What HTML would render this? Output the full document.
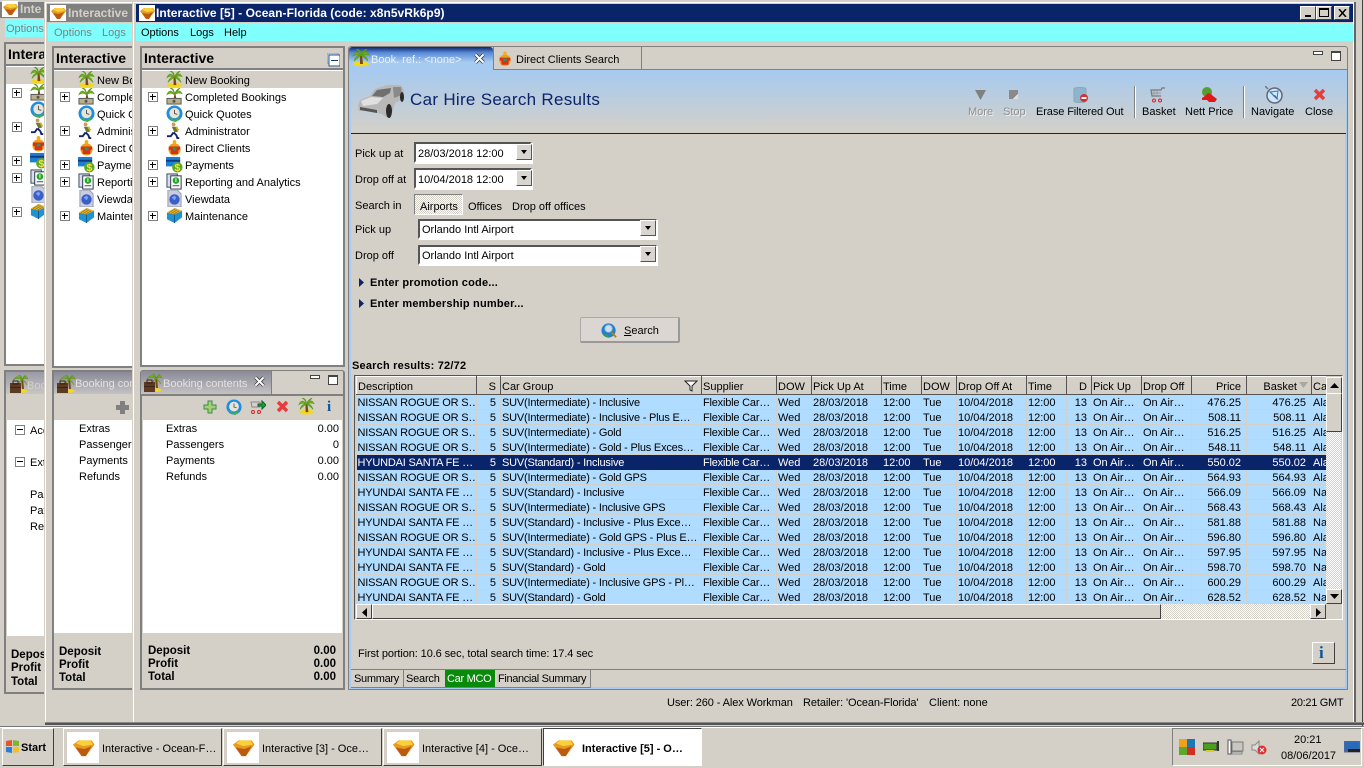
<!DOCTYPE html>
<html><head><meta charset="utf-8"><title>Interactive</title>
<style>
html,body{margin:0;padding:0;width:1364px;height:768px;overflow:hidden;background:#d4d0c8}
body{position:relative;font:11px/18px "Liberation Sans",sans-serif;color:#000}
div,span,svg{position:absolute;box-sizing:border-box}
.t{white-space:nowrap}
.pn{overflow:hidden;border:2px solid #808080;background:#fff}
.ph{left:0;top:0;right:0;height:22px;background:#d4d0c8;border-bottom:2px solid #808080;font:bold 14px/20px "Liberation Sans",sans-serif;padding-left:2px}
.sel{left:0;right:0;height:17px;background:#d4d0c8}
.pl{width:10px;height:10px;border:1px solid #808080;background:#fff}
.pl:before{content:"";position:absolute;left:1px;top:3px;width:6px;height:2px;background:linear-gradient(#000 1px,transparent 1px)}
.pl:after{content:"";position:absolute;left:3px;top:1px;width:1px;height:6px;background:#000}
.mi{width:10px;height:10px;border:1px solid #808080;background:#fff}
.mi:before{content:"";position:absolute;left:1px;top:3px;width:6px;height:1px;background:#000}
.btn{background:#d4d0c8;border:1px solid;border-color:#fff #404040 #404040 #fff}
.inp{background:#fff;border:2px solid;border-color:#555 #fff #fff #555;box-shadow:1px 1px 0 #fff}
.dd{width:16px;height:16px;background:#d9d5d0;border:1px solid;border-color:#fff #555 #555 #fff}
.dd:after{content:"";position:absolute;left:4px;top:5px;border:3px solid transparent;border-top:4px solid #000;border-bottom:0}
table{border-collapse:collapse;table-layout:fixed;position:absolute;left:0;top:0;font:11px/12px "Liberation Sans",sans-serif}
td{padding:2px 1px 0 1px;height:12px;white-space:nowrap;overflow:hidden;background:#b0dcff;border-right:1px solid #d4d0c8;border-bottom:1px solid #d4d0c8}
td:nth-child(1),td:nth-child(3),td:nth-child(4){letter-spacing:-.2px}
tr.h td{height:15px;background:#d4d0c8;border:1px solid;border-color:#fff #555 #555 #fff;letter-spacing:0}
tr.s td{background:#0a246a;color:#fff;border-color:#0a246a}
td.r{text-align:right;padding-right:4px}
td.r:nth-child(14),td.r:nth-child(15){padding-right:5px}
.dith{background:repeating-conic-gradient(#fff 0 25%,#d4d0c8 0 50%) 0 0/2px 2px}
.tk{top:728px;height:38px;width:159px;border:1px solid;border-color:#fff #404040 #404040 #fff;background:#d4d0c8}
.tk span.t{left:38px;top:11px}
.bold{font-weight:bold}
</style></head>
<body>
<svg width="0" height="0" style="left:0;top:0">
<defs>
<symbol id="logo" viewBox="0 0 16 16"><rect width="16" height="16" fill="#fff"/><path d="M1 6 5 3h9l2 3-6 8H7z" fill="#e69a20"/><path d="M3 5 6 3h7l2 3-7 1z" fill="#f9cf3c"/><path d="M7 14 3 8l6 1 5-2-4 7z" fill="#bd5a12"/></symbol>
<symbol id="palm" viewBox="0 0 18 18"><ellipse cx="9" cy="15" rx="8" ry="2.500" fill="#f4d820"/><path d="M8 6h2l1 9H8z" fill="#7a4a10"/><path d="M9 7C6 2 3 2 1 7c3-2 5-2 8 0zm0 0c3-5 6-5 8-1-3-1-5-1-8 1zM9 7C8 2 6 1 4 0c2 0 5 1 5 7zm0 0c1-4 3-6 6-7-2 2-4 4-6 7zM9 6C5 6 3 9 2 12c3-3 5-4 7-6zm0 0c4 0 6 3 7 6-3-3-5-4-7-6z" fill="#70ad1e" stroke="#5f9a18" stroke-width=".7"/></symbol>
<symbol id="palmm" viewBox="0 0 18 18"><path d="M9 6h1l1 6H8z" fill="#7a4a10"/><path d="M9 7C6 2 3 2 1 7c3-2 5-2 8 0zm0 0c3-5 6-5 8-1-3-1-5-1-8 1zM9 7C8 2 6 1 4 0c2 0 5 1 5 7zm0 0c1-4 3-6 6-7-2 2-4 4-6 7z" fill="#70ad1e" stroke="#5f9a18" stroke-width=".7"/><rect x="1" y="11" width="15" height="6" fill="#b8b08a" stroke="#555"/><circle cx="8.500" cy="14" r="1.600" fill="#555"/></symbol>
<symbol id="clock" viewBox="0 0 18 18"><circle cx="9" cy="9" r="8.500" fill="#1e8fe0"/><circle cx="9" cy="8.500" r="5.500" fill="#e8e4d8"/><path d="M9 5v4l3 1" fill="none" stroke="#555"/><path d="M4 13c3 5 7 4 10 0l-4 5z" fill="#52b030" stroke="#52b030"/></symbol>
<symbol id="run" viewBox="0 0 18 18"><circle cx="8" cy="2.500" r="2" fill="#c99b5b"/><path d="M6 5h5l2 5-4 1z" fill="#6d7a30"/><path d="M8 11l3 3 1 3h2M8 11l-3 4H1" fill="none" stroke="#14246a" stroke-width="2"/><path d="M11 5l2 4" stroke="#ddb020" stroke-width="2"/></symbol>
<symbol id="cli" viewBox="0 0 18 18"><circle cx="9" cy="3" r="2" fill="#f0b020"/><circle cx="9" cy="11" r="6.500" fill="#f0a018"/><path d="M3 8h12v3l-2 1v4H5v-4l-2-1z" fill="#d8301c"/><rect x="7" y="9" width="4" height="3" fill="#2a9a50"/></symbol>
<symbol id="pay" viewBox="0 0 18 18"><rect y="1" width="15" height="10" fill="#1b7fd0"/><rect y="4" width="15" height="2" fill="#123a80"/><circle cx="12" cy="12" r="5.500" fill="#5fa81e"/><text x="12" y="16" font-size="11" font-weight="bold" text-anchor="middle" fill="#f6e04a" font-family="Liberation Sans">$</text></symbol>
<symbol id="rep" viewBox="0 0 18 18"><rect x="1" y="1" width="11" height="14" fill="#dde" stroke="#345"/><rect x="5" y="3" width="11" height="14" fill="#fff" stroke="#234"/><circle cx="10.500" cy="8" r="3.500" fill="#22a822"/><rect x="10" y="5.500" width="1" height="4" fill="#fff"/><rect x="7" y="13" width="7" height="1" fill="#345"/></symbol>
<symbol id="view" viewBox="0 0 18 18"><path d="M2 0h10l4 4v14H2z" fill="#c8cede" stroke="#99a"/><circle cx="9" cy="10" r="5.500" fill="#3a60c8"/><path d="M6 8l3-2 2 2-2 3z" fill="#7fa0f0"/></symbol>
<symbol id="mnt" viewBox="0 0 18 18"><path d="M1 6l8-5 8 3v7l-8 6-8-4z" fill="#1f94d0"/><path d="M1 6l8-5 8 3-8 4z" fill="#f0c030"/><path d="M3 6l7-4M5 7l7-4M7 8l7-4" stroke="#a87a10"/><path d="M9 8v9" stroke="#0f5a90"/></symbol>
<symbol id="case" viewBox="0 0 18 18"><ellipse cx="13" cy="16" rx="4.500" ry="1.800" fill="#f4d820"/><path d="M11 3l1 11h2l-1-11z" fill="#7a4a10"/><path d="M12 5C9 0 6 1 3 5c3-2 6-2 9 0zm0 0c3-5 5-4 6-1-2-1-4-1-6 1zm0 0c-3 1-4 3-4 5 1-2 2-4 4-5zm0 0c3 1 4 3 5 5-1-2-3-4-5-5zM12 5c-1-3-2-4-4-5 2 0 4 1 4 5zm0 0c1-3 2-4 4-5-1 1-3 3-4 5z" fill="#70ad1e" stroke="#5f9a18" stroke-width=".6"/><rect x="0" y="8" width="11" height="10" fill="#5c3a24"/><rect x="3" y="6" width="5" height="3" fill="none" stroke="#3a2414"/><rect y="12" width="11" height="1" fill="#3a2414"/></symbol>
<symbol id="srch" viewBox="0 0 18 18"><circle cx="8" cy="9" r="7.500" fill="#1a80d8"/><circle cx="8" cy="7" r="4" fill="#cde" stroke="#8ab"/><path d="M11 11l5 5" stroke="#b08020" stroke-width="2"/><path d="M2 12l4 4 4-1z" fill="#3aa030"/></symbol>
</defs></svg>

<!-- Window 1 -->
<div style="left:0;top:2px;width:45px;height:16px;background:#808080"></div>
<svg style="left:2px;top:1px" width="16" height="16"><use href="#logo"/></svg>
<span class="t bold" style="left:20px;top:0;color:#d4d0c8;font-size:12px">Inte</span>
<div style="left:5px;top:19px;width:40px;height:18px;background:#80ffff"></div>
<span class="t" style="left:6px;top:20px;color:#808080">Options</span>
<div class="pn" style="left:4px;top:42px;width:60px;height:324px">
<div class="ph">Interactive</div>
<div class="sel" style="top:23px"></div>
<div class="pl" style="left:6px;top:44px"></div><div class="pl" style="left:6px;top:78px"></div><div class="pl" style="left:6px;top:112px"></div><div class="pl" style="left:6px;top:129px"></div><div class="pl" style="left:6px;top:163px"></div>
<svg style="left:24px;top:23px" width="17" height="17"><use href="#palm"/></svg>
<svg style="left:24px;top:40px" width="17" height="17"><use href="#palmm"/></svg>
<svg style="left:24px;top:57px" width="17" height="17"><use href="#clock"/></svg>
<svg style="left:24px;top:74px" width="17" height="17"><use href="#run"/></svg>
<svg style="left:24px;top:91px" width="17" height="17"><use href="#cli"/></svg>
<svg style="left:24px;top:108px" width="17" height="17"><use href="#pay"/></svg>
<svg style="left:24px;top:125px" width="17" height="17"><use href="#rep"/></svg>
<svg style="left:24px;top:142px" width="17" height="17"><use href="#view"/></svg>
<svg style="left:24px;top:159px" width="17" height="17"><use href="#mnt"/></svg>
</div>
<div class="pn" style="left:4px;top:370px;width:60px;height:324px;background:#d4d0c8">
<div style="left:0;top:0;width:60px;height:22px;background:linear-gradient(#9a9aa6,#c8c6c4)"></div>
<div style="left:1px;top:48px;width:60px;height:216px;background:#fff"></div>
<svg style="left:4px;top:3px" width="18" height="18"><use href="#case"/></svg>
<span class="t" style="left:21px;top:5px;color:#d4d0c8">Booking</span>
<div class="mi" style="left:9px;top:53px"></div><div class="mi" style="left:9px;top:85px"></div>
<span class="t" style="left:24px;top:50px">Accommodation</span><span class="t" style="left:24px;top:82px">Extras</span>
<span class="t" style="left:24px;top:114px">Passengers</span><span class="t" style="left:24px;top:130px">Payments</span><span class="t" style="left:24px;top:146px">Refunds</span>
<span class="t bold" style="left:5px;top:274px;font-size:11.500px">Deposit</span><span class="t bold" style="left:5px;top:287px;font-size:11.500px">Profit</span><span class="t bold" style="left:5px;top:301px;font-size:11.500px">Total</span>
</div>
<div style="left:44px;top:0;width:2px;height:723px;background:#d4d0c8"></div>

<!-- Window 2 -->
<div style="left:45px;top:2px;width:90px;height:722px;background:#d4d0c8;border-left:1px solid #fff;border-top:1px solid #fff"></div>
<div style="left:47px;top:4px;width:86px;height:18px;background:#808080"></div>
<svg style="left:50px;top:5px" width="16" height="16"><use href="#logo"/></svg>
<span class="t bold" style="left:68px;top:4px;color:#d4d0c8;font-size:12px">Interactive</span>
<div style="left:48px;top:23px;width:85px;height:18px;background:#80ffff"></div>
<span class="t" style="left:54px;top:24px;color:#808080">Options</span><span class="t" style="left:102px;top:24px;color:#808080">Logs</span>
<div class="pn" style="left:52px;top:46px;width:90px;height:322px">
<div class="ph">Interactive</div>
<div class="sel" style="top:23px"></div>
<div class="pl" style="left:6px;top:44px"></div><div class="pl" style="left:6px;top:78px"></div><div class="pl" style="left:6px;top:112px"></div><div class="pl" style="left:6px;top:129px"></div><div class="pl" style="left:6px;top:163px"></div>
<svg style="left:24px;top:23px" width="17" height="17"><use href="#palm"/></svg>
<svg style="left:24px;top:40px" width="17" height="17"><use href="#palmm"/></svg>
<svg style="left:24px;top:57px" width="17" height="17"><use href="#clock"/></svg>
<svg style="left:24px;top:74px" width="17" height="17"><use href="#run"/></svg>
<svg style="left:24px;top:91px" width="17" height="17"><use href="#cli"/></svg>
<svg style="left:24px;top:108px" width="17" height="17"><use href="#pay"/></svg>
<svg style="left:24px;top:125px" width="17" height="17"><use href="#rep"/></svg>
<svg style="left:24px;top:142px" width="17" height="17"><use href="#view"/></svg>
<svg style="left:24px;top:159px" width="17" height="17"><use href="#mnt"/></svg>
<span class="t" style="left:43px;top:24px">New Booking</span><span class="t" style="left:43px;top:41px">Completed</span><span class="t" style="left:43px;top:58px">Quick Quotes</span><span class="t" style="left:43px;top:75px">Administrator</span><span class="t" style="left:43px;top:92px">Direct Clients</span><span class="t" style="left:43px;top:109px">Payments</span><span class="t" style="left:43px;top:126px">Reporting</span><span class="t" style="left:43px;top:143px">Viewdata</span><span class="t" style="left:43px;top:160px">Maintenance</span>
</div>
<div class="pn" style="left:52px;top:370px;width:90px;height:320px;background:#d4d0c8">
<div style="left:0;top:0;width:90px;height:22px;background:linear-gradient(#8a8a98,#c4c2c2)"></div>
<div style="left:0;top:48px;width:90px;height:213px;background:#fff"></div>
<svg style="left:3px;top:3px" width="18" height="18"><use href="#case"/></svg>
<span class="t" style="left:21px;top:3px;color:#e4e2de">Booking contents</span>
<span class="t" style="left:25px;top:48px">Extras</span><span class="t" style="left:25px;top:64px">Passengers</span><span class="t" style="left:25px;top:80px">Payments</span><span class="t" style="left:25px;top:96px">Refunds</span>
<span class="t bold" style="left:5px;top:271px;font-size:11.500px">Deposit</span><span class="t bold" style="left:5px;top:284px;font-size:11.500px">Profit</span><span class="t bold" style="left:5px;top:297px;font-size:11.500px">Total</span>
<div style="left:62px;top:33px;width:13px;height:5px;background:#808080"></div><div style="left:66px;top:29px;width:5px;height:13px;background:#808080"></div>
</div>
<div style="left:132px;top:0;width:2px;height:723px;background:#d4d0c8"></div>

<!-- Window 3 frame -->
<div style="left:133px;top:2px;width:1222px;height:722px;background:#d4d0c8;border-left:1px solid #fff;border-top:1px solid #fff"></div>
<div style="left:136px;top:4px;width:1218px;height:18px;background:#0a246a"></div>
<svg style="left:139px;top:5px" width="16" height="16"><use href="#logo"/></svg>
<span class="t bold" style="left:156px;top:4px;color:#fff;font-size:12px;letter-spacing:.05px">Interactive [5] - Ocean-Florida (code: x8n5vRk6p9)</span>
<div class="btn" style="left:1300px;top:6px;width:16px;height:14px"><div style="left:4px;top:8px;width:6px;height:2px;background:#000"></div></div>
<div class="btn" style="left:1316px;top:6px;width:16px;height:14px"><div style="left:2px;top:1px;width:10px;height:9px;border:1px solid #000;border-top-width:2px"></div></div>
<div class="btn" style="left:1334px;top:6px;width:16px;height:14px"><svg style="left:3px;top:2px" width="9" height="8"><path d="M1 0l7 8M8 0L1 8" stroke="#000" stroke-width="1.500"/></svg></div>
<div style="left:136px;top:23px;width:1218px;height:18px;background:#80ffff"></div>
<span class="t" style="left:141px;top:24px">Options</span><span class="t" style="left:190px;top:24px">Logs</span><span class="t" style="left:224px;top:24px">Help</span>

<!-- Left panel -->
<div class="pn" style="left:140px;top:46px;width:205px;height:321px">
<div class="ph">Interactive</div>
<svg style="left:185px;top:5px" width="13" height="14"><rect x="0" y="0" width="11" height="10" fill="#c8d8ee" stroke="#7a9ac0"/><rect x="2" y="2" width="11" height="11" fill="#fff" stroke="#2a5a90"/><rect x="4" y="7" width="7" height="1" fill="#103a70"/></svg>
<div class="sel" style="top:23px"></div>
<div class="pl" style="left:6px;top:44px"></div><div class="pl" style="left:6px;top:78px"></div><div class="pl" style="left:6px;top:112px"></div><div class="pl" style="left:6px;top:129px"></div><div class="pl" style="left:6px;top:163px"></div>
<svg style="left:24px;top:23px" width="17" height="17"><use href="#palm"/></svg>
<svg style="left:24px;top:40px" width="17" height="17"><use href="#palmm"/></svg>
<svg style="left:24px;top:57px" width="17" height="17"><use href="#clock"/></svg>
<svg style="left:24px;top:74px" width="17" height="17"><use href="#run"/></svg>
<svg style="left:24px;top:91px" width="17" height="17"><use href="#cli"/></svg>
<svg style="left:24px;top:108px" width="17" height="17"><use href="#pay"/></svg>
<svg style="left:24px;top:125px" width="17" height="17"><use href="#rep"/></svg>
<svg style="left:24px;top:142px" width="17" height="17"><use href="#view"/></svg>
<svg style="left:24px;top:159px" width="17" height="17"><use href="#mnt"/></svg>
<span class="t" style="left:43px;top:24px">New Booking</span><span class="t" style="left:43px;top:41px">Completed Bookings</span><span class="t" style="left:43px;top:58px">Quick Quotes</span><span class="t" style="left:43px;top:75px">Administrator</span><span class="t" style="left:43px;top:92px">Direct Clients</span><span class="t" style="left:43px;top:109px">Payments</span><span class="t" style="left:43px;top:126px">Reporting and Analytics</span><span class="t" style="left:43px;top:143px">Viewdata</span><span class="t" style="left:43px;top:160px">Maintenance</span>
</div>

<!-- Booking contents -->
<div style="left:140px;top:370px;width:205px;height:320px;border:2px solid #808080;border-top:1px solid #808080;border-radius:3px 3px 0 0;background:#d4d0c8"></div>
<div style="left:141px;top:371px;width:131px;height:23px;background:linear-gradient(#8a8a98,#c4c2c2);border-right:1px solid #808080"></div>
<div style="left:142px;top:394px;width:202px;height:2px;background:#808080"></div>
<svg style="left:144px;top:374px" width="18" height="18"><use href="#case"/></svg>
<span class="t" style="left:163px;top:375px;color:#e4e2de">Booking contents</span>
<svg style="left:254px;top:376px" width="11" height="11"><path d="M1.500 1.500l8 8M9.500 1.500l-8 8" stroke="#333" stroke-width="3.500"/><path d="M1.500 1.500l8 8M9.500 1.500l-8 8" stroke="#fff" stroke-width="2"/></svg>
<div style="left:310px;top:375px;width:10px;height:4px;border:1px solid #444;background:#fff"></div>
<div style="left:328px;top:375px;width:10px;height:10px;border:1px solid #444;border-top-width:2px;background:#fff"></div>
<svg style="left:203px;top:400px" width="14" height="14"><path d="M5 1h4v4h4v4H9v4H5V9H1V5h4z" fill="#a4d070" stroke="#3a8a50"/></svg>
<svg style="left:226px;top:399px" width="16" height="16"><use href="#clock"/></svg>
<svg style="left:250px;top:399px" width="16" height="16"><path d="M1 3h9v5H2z" fill="none" stroke="#888"/><circle cx="3" cy="13" r="1.500" fill="none" stroke="#d22"/><circle cx="9" cy="13" r="1.500" fill="none" stroke="#d22"/><path d="M8 5h4V2l4 4-4 4V7H8z" fill="#28a028" stroke="#063"/></svg>
<svg style="left:276px;top:400px" width="13" height="13"><path d="M2 2l9 9M11 2l-9 9" stroke="#e83c3c" stroke-width="3.500"/></svg>
<svg style="left:298px;top:398px" width="17" height="17"><use href="#palm"/></svg>
<span class="t bold" style="left:327px;top:399px;font:bold 15px/16px 'Liberation Serif',serif;color:#0a55a0">i</span>
<div style="left:143px;top:420px;width:199px;height:213px;background:#fff"></div>
<span class="t" style="left:166px;top:420px">Extras</span><span class="t" style="left:166px;top:436px">Passengers</span><span class="t" style="left:166px;top:452px">Payments</span><span class="t" style="left:166px;top:468px">Refunds</span>
<span class="t" style="right:1025px;top:420px">0.00</span><span class="t" style="right:1025px;top:436px">0</span><span class="t" style="right:1025px;top:452px">0.00</span><span class="t" style="right:1025px;top:468px">0.00</span>
<span class="t bold" style="left:148px;top:642px;font-size:11.500px">Deposit</span><span class="t bold" style="left:148px;top:655px;font-size:11.500px">Profit</span><span class="t bold" style="left:148px;top:668px;font-size:11.500px">Total</span>
<span class="t bold" style="right:1028px;top:642px;font-size:11.500px">0.00</span><span class="t bold" style="right:1028px;top:655px;font-size:11.500px">0.00</span><span class="t bold" style="right:1028px;top:668px;font-size:11.500px">0.00</span>

<!-- Main panel -->
<div style="left:348px;top:46px;width:1000px;height:644px;border:1px solid #808080;border-radius:3px 3px 0 0;background:#d4d0c8"></div>
<div style="left:349px;top:69px;width:998px;height:620px;border:2px solid #a6caf0;border-top:0"></div>
<div style="left:349px;top:47px;width:144px;height:23px;background:linear-gradient(#0a246a,#5a8ad8 25%,#a6caf0 65%);border-radius:3px 3px 0 0"></div>
<div style="left:493px;top:47px;width:149px;height:23px;border-right:1px solid #808080;border-left:1px solid #808080"></div>
<div style="left:493px;top:69px;width:854px;height:1px;background:#808080"></div>
<svg style="left:352px;top:49px" width="18" height="18"><use href="#palm"/></svg>
<span class="t" style="left:371px;top:51px;color:#eef2fa">Book. ref.: &lt;none&gt;</span>
<svg style="left:474px;top:53px" width="11" height="11"><path d="M1.500 1.500l8 8M9.500 1.500l-8 8" stroke="#333" stroke-width="3.500"/><path d="M1.500 1.500l8 8M9.500 1.500l-8 8" stroke="#fff" stroke-width="2"/></svg>
<svg style="left:497px;top:50px" width="16" height="17"><use href="#cli"/></svg>
<span class="t" style="left:516px;top:51px">Direct Clients Search</span>
<div style="left:1313px;top:51px;width:10px;height:4px;border:1px solid #444;background:#fff"></div>
<div style="left:1331px;top:51px;width:10px;height:10px;border:1px solid #444;border-top-width:2px;background:#fff"></div>

<!-- Banner -->
<div style="left:351px;top:70px;width:995px;height:63px;background:linear-gradient(#a6caf0,#d4d0c8)"></div>
<div style="left:351px;top:133px;width:995px;height:1px;background:#0a246a"></div>
<svg style="left:357px;top:83px" width="48" height="36" viewBox="0 0 48 36"><path d="M1 23 3 17l10-4 5-7L30 2h14l3 5-1 9-8 4-2 8-6 7-5-4-17-3H2z" fill="#b8b8b8"/><path d="M15 13l5-6 14-2-1 5-7 4z" fill="#6f6f6f"/><path d="M4 18l10-4 12 1-6 6-14 2z" fill="#e0e0e0"/><path d="M36 4h8l1 8-8 3z" fill="#8a8a8a"/><path d="M3 24l17 3v3L3 27z" fill="#555"/><ellipse cx="32" cy="28" rx="3" ry="7" fill="#2a2a2a"/><ellipse cx="45" cy="14" rx="2" ry="5" fill="#2a2a2a"/></svg>
<span class="t" style="left:410px;top:90px;font:17px/20px 'Liberation Sans',sans-serif;color:#0a246a;letter-spacing:.3px">Car Hire Search Results</span>

<!-- Toolbar -->
<svg style="left:975px;top:90px" width="11" height="10"><path d="M0 0h11L5.500 10z" fill="#808080"/></svg>
<div style="left:1009px;top:90px;width:9px;height:9px;background:linear-gradient(135deg,#8a8a8a 70%,#e0e0e0 70%)"></div>
<svg style="left:1073px;top:87px" width="16" height="16"><path d="M1 2c0-2 12-2 12 0v12c0 2-12 2-12 0z" fill="#8fb4d0" stroke="#8aa"/><circle cx="11" cy="11" r="4" fill="#d83030"/><rect x="8.500" y="10" width="5" height="2" fill="#fff"/></svg>
<div style="left:1134px;top:86px;width:1px;height:32px;background:#808080;box-shadow:1px 0 0 #fff"></div>
<svg style="left:1150px;top:87px" width="16" height="16"><path d="M15 1h-3l-1 2H1l1 6h9" fill="none" stroke="#777" stroke-width="1.200"/><path d="M4 3v6M7 3v6M2 6h9" stroke="#999"/><circle cx="4" cy="13.500" r="1.500" fill="none" stroke="#d22"/><circle cx="10" cy="13.500" r="1.500" fill="none" stroke="#d22"/></svg>
<svg style="left:1201px;top:87px" width="17" height="16"><circle cx="6" cy="5" r="5" fill="#52a030"/><path d="M4 9l3-3 3 1 2 2 4 3-2 3-6 0-2-2-5 0 0-2z" fill="#e01818"/></svg>
<div style="left:1243px;top:86px;width:1px;height:32px;background:#808080;box-shadow:1px 0 0 #fff"></div>
<svg style="left:1265px;top:86px" width="18" height="18"><circle cx="9.500" cy="9.500" r="7.500" fill="#cfe8f8" stroke="#667" stroke-width="1.500"/><path d="M6 6l4 4-1 1zM14 14L9 10l1-1z" fill="#d02020"/><path d="M5 6l8-1-1 8z" fill="none" stroke="#3a7ac0"/><path d="M0 0l3 3" stroke="#776" stroke-width="1.500"/></svg>
<svg style="left:1313px;top:88px" width="13" height="13"><path d="M2 2l9 9M11 2l-9 9" stroke="#e83c3c" stroke-width="3.500"/></svg>
<span class="t" style="left:968px;top:103px;color:#909090;text-shadow:1px 1px 0 #f0f0f0">More</span>
<span class="t" style="left:1003px;top:103px;color:#909090;text-shadow:1px 1px 0 #f0f0f0">Stop</span>
<span class="t" style="left:1036px;top:103px;letter-spacing:-.1px">Erase Filtered Out</span>
<span class="t" style="left:1142px;top:103px">Basket</span>
<span class="t" style="left:1185px;top:103px">Nett Price</span>
<span class="t" style="left:1251px;top:103px">Navigate</span>
<span class="t" style="left:1305px;top:103px">Close</span>

<!-- Form -->
<span class="t" style="left:355px;top:145px">Pick up at</span>
<div class="inp" style="left:414px;top:142px;width:118px;height:21px"></div>
<span class="t" style="left:418px;top:145px">28/03/2018 12:00</span>
<div class="dd" style="left:516px;top:144px"></div>
<span class="t" style="left:355px;top:171px">Drop off at</span>
<div class="inp" style="left:414px;top:168px;width:118px;height:21px"></div>
<span class="t" style="left:418px;top:171px">10/04/2018 12:00</span>
<div class="dd" style="left:516px;top:170px"></div>
<span class="t" style="left:355px;top:197px">Search in</span>
<div class="dith" style="left:414px;top:194px;width:49px;height:21px;border:1px solid;border-color:#808080 #fff #fff #808080"></div>
<span class="t" style="left:420px;top:198px">Airports</span>
<span class="t" style="left:468px;top:198px">Offices</span>
<span class="t" style="left:512px;top:198px">Drop off offices</span>
<span class="t" style="left:355px;top:221px">Pick up</span>
<div class="inp" style="left:418px;top:219px;width:239px;height:20px"></div>
<span class="t" style="left:422px;top:221px">Orlando Intl Airport</span>
<div class="dd" style="left:640px;top:220px"></div>
<span class="t" style="left:355px;top:247px">Drop off</span>
<div class="inp" style="left:418px;top:245px;width:239px;height:20px"></div>
<span class="t" style="left:422px;top:247px">Orlando Intl Airport</span>
<div class="dd" style="left:640px;top:246px"></div>
<svg style="left:359px;top:278px" width="5" height="9"><path d="M0 0l5 4.500L0 9z" fill="#0a246a"/></svg>
<span class="t bold" style="left:370px;top:274px;letter-spacing:.2px">Enter promotion code...</span>
<svg style="left:359px;top:299px" width="5" height="9"><path d="M0 0l5 4.500L0 9z" fill="#0a246a"/></svg>
<span class="t bold" style="left:370px;top:295px;letter-spacing:.2px">Enter membership number...</span>
<div style="left:580px;top:317px;width:100px;height:26px;background:#dcd6d2;border:1px solid #aaa;border-right:2px solid #999;border-bottom:2px solid #999;border-radius:2px"></div>
<svg style="left:601px;top:322px" width="17" height="17"><use href="#srch"/></svg>
<span class="t" style="left:624px;top:322px"><u>S</u>earch</span>
<span class="t bold" style="left:352px;top:357px;letter-spacing:.2px">Search results: 72/72</span>

<!-- Grid -->
<div style="left:354px;top:375px;width:989px;height:245px;border:1px solid;border-color:#555 #fff #fff #555;background:#d4d0c8"></div>
<div style="left:356px;top:376px;width:970px;height:228px;overflow:hidden">
<table style="width:970px">
<colgroup><col style="width:120px"><col style="width:24px"><col style="width:201px"><col style="width:75px"><col style="width:35px"><col style="width:70px"><col style="width:40px"><col style="width:35px"><col style="width:70px"><col style="width:40px"><col style="width:25px"><col style="width:50px"><col style="width:50px"><col style="width:55px"><col style="width:65px"><col style="width:15px"></colgroup>
<tr class="h"><td>Description</td><td class="r">S</td><td>Car Group</td><td>Supplier</td><td>DOW</td><td>Pick Up At</td><td>Time</td><td>DOW</td><td>Drop Off At</td><td>Time</td><td class="r">D</td><td>Pick Up</td><td>Drop Off</td><td class="r">Price</td><td class="r" style="padding-right:14px">Basket</td><td>Ca</td></tr>
<tr><td>NISSAN ROGUE OR S…</td><td class="r">5</td><td>SUV(Intermediate) - Inclusive</td><td>Flexible Car…</td><td>Wed</td><td>28/03/2018</td><td>12:00</td><td>Tue</td><td>10/04/2018</td><td>12:00</td><td class="r">13</td><td>On Air…</td><td>On Air…</td><td class="r">476.25</td><td class="r">476.25</td><td>Ala</td></tr>
<tr><td>NISSAN ROGUE OR S…</td><td class="r">5</td><td>SUV(Intermediate) - Inclusive - Plus E…</td><td>Flexible Car…</td><td>Wed</td><td>28/03/2018</td><td>12:00</td><td>Tue</td><td>10/04/2018</td><td>12:00</td><td class="r">13</td><td>On Air…</td><td>On Air…</td><td class="r">508.11</td><td class="r">508.11</td><td>Ala</td></tr>
<tr><td>NISSAN ROGUE OR S…</td><td class="r">5</td><td>SUV(Intermediate) - Gold</td><td>Flexible Car…</td><td>Wed</td><td>28/03/2018</td><td>12:00</td><td>Tue</td><td>10/04/2018</td><td>12:00</td><td class="r">13</td><td>On Air…</td><td>On Air…</td><td class="r">516.25</td><td class="r">516.25</td><td>Ala</td></tr>
<tr><td>NISSAN ROGUE OR S…</td><td class="r">5</td><td>SUV(Intermediate) - Gold - Plus Exces…</td><td>Flexible Car…</td><td>Wed</td><td>28/03/2018</td><td>12:00</td><td>Tue</td><td>10/04/2018</td><td>12:00</td><td class="r">13</td><td>On Air…</td><td>On Air…</td><td class="r">548.11</td><td class="r">548.11</td><td>Ala</td></tr>
<tr class="s"><td>HYUNDAI SANTA FE …</td><td class="r">5</td><td>SUV(Standard) - Inclusive</td><td>Flexible Car…</td><td>Wed</td><td>28/03/2018</td><td>12:00</td><td>Tue</td><td>10/04/2018</td><td>12:00</td><td class="r">13</td><td>On Air…</td><td>On Air…</td><td class="r">550.02</td><td class="r">550.02</td><td>Ala</td></tr>
<tr><td>NISSAN ROGUE OR S…</td><td class="r">5</td><td>SUV(Intermediate) - Gold GPS</td><td>Flexible Car…</td><td>Wed</td><td>28/03/2018</td><td>12:00</td><td>Tue</td><td>10/04/2018</td><td>12:00</td><td class="r">13</td><td>On Air…</td><td>On Air…</td><td class="r">564.93</td><td class="r">564.93</td><td>Ala</td></tr>
<tr><td>HYUNDAI SANTA FE …</td><td class="r">5</td><td>SUV(Standard) - Inclusive</td><td>Flexible Car…</td><td>Wed</td><td>28/03/2018</td><td>12:00</td><td>Tue</td><td>10/04/2018</td><td>12:00</td><td class="r">13</td><td>On Air…</td><td>On Air…</td><td class="r">566.09</td><td class="r">566.09</td><td>Na</td></tr>
<tr><td>NISSAN ROGUE OR S…</td><td class="r">5</td><td>SUV(Intermediate) - Inclusive GPS</td><td>Flexible Car…</td><td>Wed</td><td>28/03/2018</td><td>12:00</td><td>Tue</td><td>10/04/2018</td><td>12:00</td><td class="r">13</td><td>On Air…</td><td>On Air…</td><td class="r">568.43</td><td class="r">568.43</td><td>Ala</td></tr>
<tr><td>HYUNDAI SANTA FE …</td><td class="r">5</td><td>SUV(Standard) - Inclusive - Plus Exce…</td><td>Flexible Car…</td><td>Wed</td><td>28/03/2018</td><td>12:00</td><td>Tue</td><td>10/04/2018</td><td>12:00</td><td class="r">13</td><td>On Air…</td><td>On Air…</td><td class="r">581.88</td><td class="r">581.88</td><td>Na</td></tr>
<tr><td>NISSAN ROGUE OR S…</td><td class="r">5</td><td>SUV(Intermediate) - Gold GPS - Plus E…</td><td>Flexible Car…</td><td>Wed</td><td>28/03/2018</td><td>12:00</td><td>Tue</td><td>10/04/2018</td><td>12:00</td><td class="r">13</td><td>On Air…</td><td>On Air…</td><td class="r">596.80</td><td class="r">596.80</td><td>Ala</td></tr>
<tr><td>HYUNDAI SANTA FE …</td><td class="r">5</td><td>SUV(Standard) - Inclusive - Plus Exce…</td><td>Flexible Car…</td><td>Wed</td><td>28/03/2018</td><td>12:00</td><td>Tue</td><td>10/04/2018</td><td>12:00</td><td class="r">13</td><td>On Air…</td><td>On Air…</td><td class="r">597.95</td><td class="r">597.95</td><td>Na</td></tr>
<tr><td>HYUNDAI SANTA FE …</td><td class="r">5</td><td>SUV(Standard) - Gold</td><td>Flexible Car…</td><td>Wed</td><td>28/03/2018</td><td>12:00</td><td>Tue</td><td>10/04/2018</td><td>12:00</td><td class="r">13</td><td>On Air…</td><td>On Air…</td><td class="r">598.70</td><td class="r">598.70</td><td>Na</td></tr>
<tr><td>NISSAN ROGUE OR S…</td><td class="r">5</td><td>SUV(Intermediate) - Inclusive GPS - Pl…</td><td>Flexible Car…</td><td>Wed</td><td>28/03/2018</td><td>12:00</td><td>Tue</td><td>10/04/2018</td><td>12:00</td><td class="r">13</td><td>On Air…</td><td>On Air…</td><td class="r">600.29</td><td class="r">600.29</td><td>Ala</td></tr>
<tr><td>HYUNDAI SANTA FE …</td><td class="r">5</td><td>SUV(Standard) - Gold</td><td>Flexible Car…</td><td>Wed</td><td>28/03/2018</td><td>12:00</td><td>Tue</td><td>10/04/2018</td><td>12:00</td><td class="r">13</td><td>On Air…</td><td>On Air…</td><td class="r">628.52</td><td class="r">628.52</td><td>Na</td></tr>
</table>
</div>
<svg style="left:1299px;top:382px" width="9" height="7"><path d="M0 0h9L4.500 6z" fill="#a8a8a0"/></svg>
<svg style="left:684px;top:380px" width="14" height="12"><path d="M1 1h12L8 6v5L6 10V6z" fill="#fff" stroke="#222"/></svg>
<div class="dith" style="left:1326px;top:377px;width:15px;height:227px"></div>
<div class="btn" style="left:1326px;top:377px;width:16px;height:17px"><svg style="left:3px;top:5px" width="9" height="5"><path d="M0 5l4.500-5L9 5z"/></svg></div>
<div class="btn" style="left:1326px;top:393px;width:16px;height:39px"></div>
<div class="btn" style="left:1326px;top:589px;width:16px;height:15px"><svg style="left:3px;top:4px" width="9" height="5"><path d="M0 0l4.500 5L9 0z"/></svg></div>
<div class="dith" style="left:356px;top:604px;width:970px;height:15px"></div>
<div class="btn" style="left:356px;top:604px;width:16px;height:15px"><svg style="left:5px;top:3px" width="5" height="9"><path d="M5 0L0 4.500 5 9z"/></svg></div>
<div class="btn" style="left:372px;top:604px;width:789px;height:15px"></div>
<div class="btn" style="left:1310px;top:604px;width:16px;height:15px"><svg style="left:5px;top:3px" width="5" height="9"><path d="M0 0l5 4.500L0 9z"/></svg></div>

<span class="t" style="left:358px;top:645px;letter-spacing:-.1px">First portion: 10.6 sec, total search time: 17.4 sec</span>
<div class="btn" style="left:1312px;top:642px;width:23px;height:22px"></div>
<span class="t bold" style="left:1319px;top:644px;font:bold 17px/18px 'Liberation Serif',serif;color:#0a55a0">i</span>

<!-- Bottom tabs -->
<div style="left:351px;top:669px;width:995px;height:1px;background:#808080"></div>
<span class="t" style="left:354px;top:670px;letter-spacing:-.3px">Summary</span>
<div style="left:403px;top:670px;width:1px;height:18px;background:#808080"></div>
<span class="t" style="left:406px;top:670px;letter-spacing:-.2px">Search</span>
<div style="left:445px;top:670px;width:50px;height:18px;background:#0a8a0a"></div>
<span class="t" style="left:447px;top:670px;color:#fff;letter-spacing:-.3px">Car MCO</span>
<span class="t" style="left:498px;top:670px;letter-spacing:-.35px">Financial Summary</span>
<div style="left:590px;top:670px;width:1px;height:18px;background:#808080"></div>
<div style="left:351px;top:687px;width:240px;height:1px;background:#808080"></div>

<span class="t" style="left:667px;top:694px;letter-spacing:-.1px">User: 260 - Alex Workman</span>
<span class="t" style="left:803px;top:694px;letter-spacing:-.1px">Retailer: 'Ocean-Florida'</span>
<span class="t" style="left:929px;top:694px">Client: none</span>
<span class="t" style="left:1291px;top:694px;letter-spacing:-.3px">20:21 GMT</span>

<!-- Window frames -->
<div style="left:1353px;top:2px;width:1px;height:721px;background:#fff"></div>
<div style="left:1354px;top:2px;width:2px;height:722px;background:#666"></div>
<div style="left:1362px;top:0;width:1px;height:726px;background:#444"></div>
<div style="left:45px;top:722px;width:1319px;height:1px;background:#888"></div>
<div style="left:45px;top:723px;width:1319px;height:2px;background:#555"></div>
<div style="left:0;top:726px;width:1364px;height:1px;background:#777"></div>
<div style="left:0;top:727px;width:1364px;height:1px;background:#fff"></div>

<!-- Taskbar -->
<div class="btn" style="left:2px;top:728px;width:52px;height:38px"></div>
<svg style="left:5px;top:739px" width="15" height="15"><path d="M1 2l6-1v6H1z" fill="#e8542a"/><path d="M8 1l6 1v5H8z" fill="#7cb82a"/><path d="M1 8h6v6l-6-1z" fill="#2a80d8"/><path d="M8 8h6v5l-6 1z" fill="#f4c020"/></svg>
<span class="t bold" style="left:21px;top:739px">Start</span>
<div class="tk" style="left:63px"><div style="left:3px;top:3px;width:32px;height:31px;background:#fff"></div><svg style="left:5px;top:7px" width="28" height="23" viewBox="0 0 16 16"><path d="M1 6 5 3h9l2 3-6 8H7z" fill="#e69a20"/><path d="M3 5 6 3h7l2 3-7 1z" fill="#f9cf3c"/><path d="M7 14 3 8l6 1 5-2-4 7z" fill="#bd5a12"/></svg><span class="t">Interactive - Ocean-F…</span></div>
<div class="tk" style="left:223px"><div style="left:3px;top:3px;width:32px;height:31px;background:#fff"></div><svg style="left:5px;top:7px" width="28" height="23" viewBox="0 0 16 16"><path d="M1 6 5 3h9l2 3-6 8H7z" fill="#e69a20"/><path d="M3 5 6 3h7l2 3-7 1z" fill="#f9cf3c"/><path d="M7 14 3 8l6 1 5-2-4 7z" fill="#bd5a12"/></svg><span class="t">Interactive [3] - Oce…</span></div>
<div class="tk" style="left:383px"><div style="left:3px;top:3px;width:32px;height:31px;background:#fff"></div><svg style="left:5px;top:7px" width="28" height="23" viewBox="0 0 16 16"><path d="M1 6 5 3h9l2 3-6 8H7z" fill="#e69a20"/><path d="M3 5 6 3h7l2 3-7 1z" fill="#f9cf3c"/><path d="M7 14 3 8l6 1 5-2-4 7z" fill="#bd5a12"/></svg><span class="t">Interactive [4] - Oce…</span></div>
<div class="tk" style="left:543px;background:#fff;border-color:#404040 #fff #fff #404040"><svg style="left:5px;top:7px" width="28" height="23" viewBox="0 0 16 16"><path d="M1 6 5 3h9l2 3-6 8H7z" fill="#e69a20"/><path d="M3 5 6 3h7l2 3-7 1z" fill="#f9cf3c"/><path d="M7 14 3 8l6 1 5-2-4 7z" fill="#bd5a12"/></svg><span class="t bold">Interactive [5] - O…</span></div>

<div style="left:1172px;top:728px;width:190px;height:38px;border:1px solid;border-color:#808080 #fff #fff #808080"></div>
<svg style="left:1179px;top:739px" width="16" height="16"><rect width="8" height="8" fill="#f0a020"/><rect x="8" width="8" height="8" fill="#1a78b8"/><rect y="8" width="8" height="8" fill="#5aa830"/><rect x="8" y="8" width="8" height="8" fill="#d03020"/></svg>
<svg style="left:1203px;top:741px" width="16" height="12"><rect y="2" width="14" height="7" fill="#4aa020" stroke="#333"/><rect x="14" width="2" height="10" fill="#333"/><path d="M3 10h8" stroke="#dc2" stroke-width="2"/></svg>
<svg style="left:1227px;top:739px" width="17" height="16"><rect x="5" y="3" width="11" height="9" fill="#c8c8c0" stroke="#777"/><rect x="1" y="1" width="3" height="14" fill="#fff" stroke="#555"/><rect x="5" y="13" width="10" height="2" fill="#ddd" stroke="#888"/></svg>
<svg style="left:1251px;top:740px" width="16" height="15"><path d="M1 5h3l4-4v13L4 10H1z" fill="#ddd" stroke="#888"/><circle cx="11" cy="10" r="4.500" fill="#e03030"/><path d="M9 8l4 4M13 8l-4 4" stroke="#fff"/></svg>
<span class="t" style="left:1294px;top:731px">20:21</span>
<span class="t" style="left:1281px;top:747px">08/06/2017</span>
<svg style="left:1344px;top:741px" width="16" height="13"><rect width="16" height="11" fill="#2a6ab8" stroke="#668"/><rect x="4" y="8" width="12" height="3" fill="#222"/></svg>
</body></html>
